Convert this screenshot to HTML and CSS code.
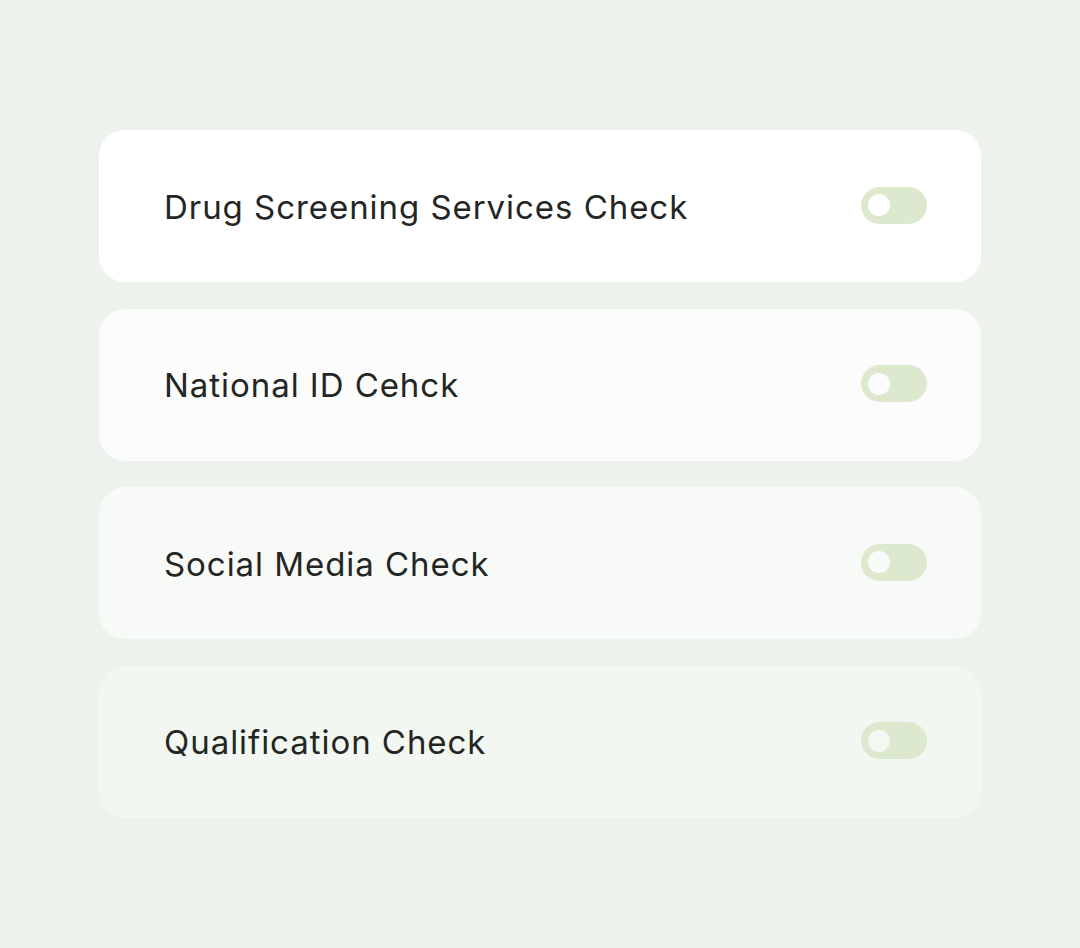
FILE: index.html
```html
<!DOCTYPE html>
<html>
<head>
<meta charset="utf-8">
<link rel="stylesheet" href="styles.css">
</head>
<body>
<div class="list">
  <div class="card c1">
    <span class="label">Drug Screening Services Check</span>
    <span class="toggle"><span class="knob"></span></span>
  </div>
  <div class="card c2">
    <span class="label">National ID Cehck</span>
    <span class="toggle"><span class="knob"></span></span>
  </div>
  <div class="card c3">
    <span class="label">Social Media Check</span>
    <span class="toggle"><span class="knob"></span></span>
  </div>
  <div class="card c4">
    <span class="label">Qualification Check</span>
    <span class="toggle"><span class="knob"></span></span>
  </div>
</div>
</body>
</html>
```

FILE: styles.css
```css
html, body {
  margin: 0;
  padding: 0;
}
body {
  background: #ecf2ec;
  width: 1080px;
  height: 948px;
  font-family: Inter, "Noto Sans", sans-serif;
}
.list {
  display: flex;
  flex-direction: column;
  gap: 26.6px;
  padding: 130px 99px 0 99px;
}
.card {
  height: 152px;
  border-radius: 26px;
  display: flex;
  align-items: center;
  justify-content: space-between;
  padding: 0 54px 0 65px;
  box-sizing: border-box;
}
.c1 { background: #ffffff; --bg: #ffffff; }
.c2 { background: #fbfcfb; --bg: #fbfcfb; }
.c3 { background: #f7faf6; --bg: #f8faf7; }
.c4 { background: #f3f7f2; --bg: #f4f8f2; }
.label {
  font-size: 33px;
  color: #232623;
  letter-spacing: 0.95px;
  margin-top: 1px;
}
.toggle {
  width: 66px;
  height: 37px;
  border-radius: 19px;
  background: #dde9cf;
  display: flex;
  align-items: center;
  padding-left: 7px;
  box-sizing: border-box;
  margin-top: -2px;
}
.knob {
  width: 22px;
  height: 22px;
  border-radius: 50%;
  background: var(--bg);
}
```
